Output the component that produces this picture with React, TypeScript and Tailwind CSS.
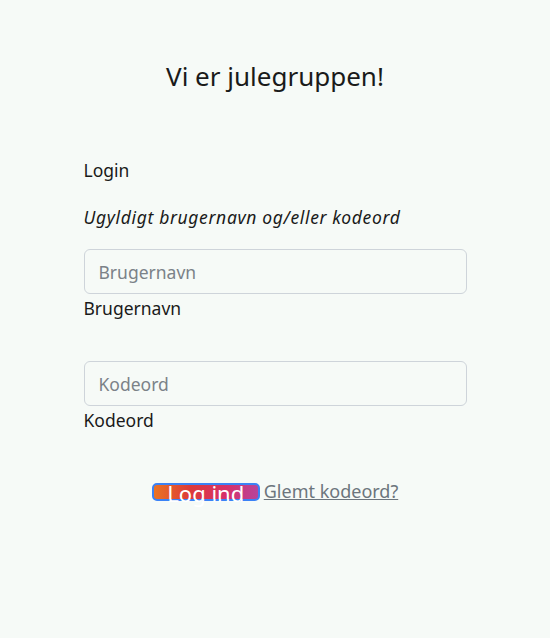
export default function App() {
  return (
    <div className="min-h-[638px] w-full bg-[#f6faf7] text-[#1a1a1a] [font-family:'Noto_Sans',sans-serif]">
      <div className="mx-auto flex w-[383px] flex-col pt-[56px]">
        <h1 className="text-center text-[26px] leading-[40px]">Vi er julegruppen!</h1>

        <form className="mt-[62px] flex flex-col" onSubmit={(e) => e.preventDefault()}>
          <p className="text-[17.5px] leading-[24px]">Login</p>
          <p className="mt-[23px] text-[17.5px] italic leading-[24px] tracking-[0.65px]">
            Ugyldigt brugernavn og/eller kodeord
          </p>

          <div className="mt-[20px] flex flex-col">
            <input
              type="text"
              placeholder="Brugernavn"
              className="h-[45px] w-full rounded-[6px] border border-[#ced4da] bg-[#f6faf7] px-[14px] text-[17.5px] placeholder:text-[#7b8288] outline-none"
            />
            <label className="text-[17.5px] leading-[28px]">Brugernavn</label>
          </div>

          <div className="mt-[39px] flex flex-col">
            <input
              type="password"
              placeholder="Kodeord"
              className="h-[45px] w-full rounded-[6px] border border-[#ced4da] bg-[#f6faf7] px-[14px] text-[17.5px] placeholder:text-[#7b8288] outline-none"
            />
            <label className="text-[17.5px] leading-[28px]">Kodeord</label>
          </div>

          <div className="mt-[44px] flex items-center justify-center gap-[4px]">
            <button
              type="submit"
              className="flex h-[18px] w-[108px] items-start justify-center overflow-visible rounded-[5px] border-2 border-[#3b82f6] bg-[linear-gradient(90deg,#ea7324_0%,#dc3a3a_35%,#d6306a_70%,#b8449a_100%)] text-[22px] leading-[16px] text-white"
            >
              Log ind
            </button>
            <a href="#" className="text-[18px] text-[#6c757d] underline">
              Glemt kodeord?
            </a>
          </div>
        </form>
      </div>
    </div>
  )
}
